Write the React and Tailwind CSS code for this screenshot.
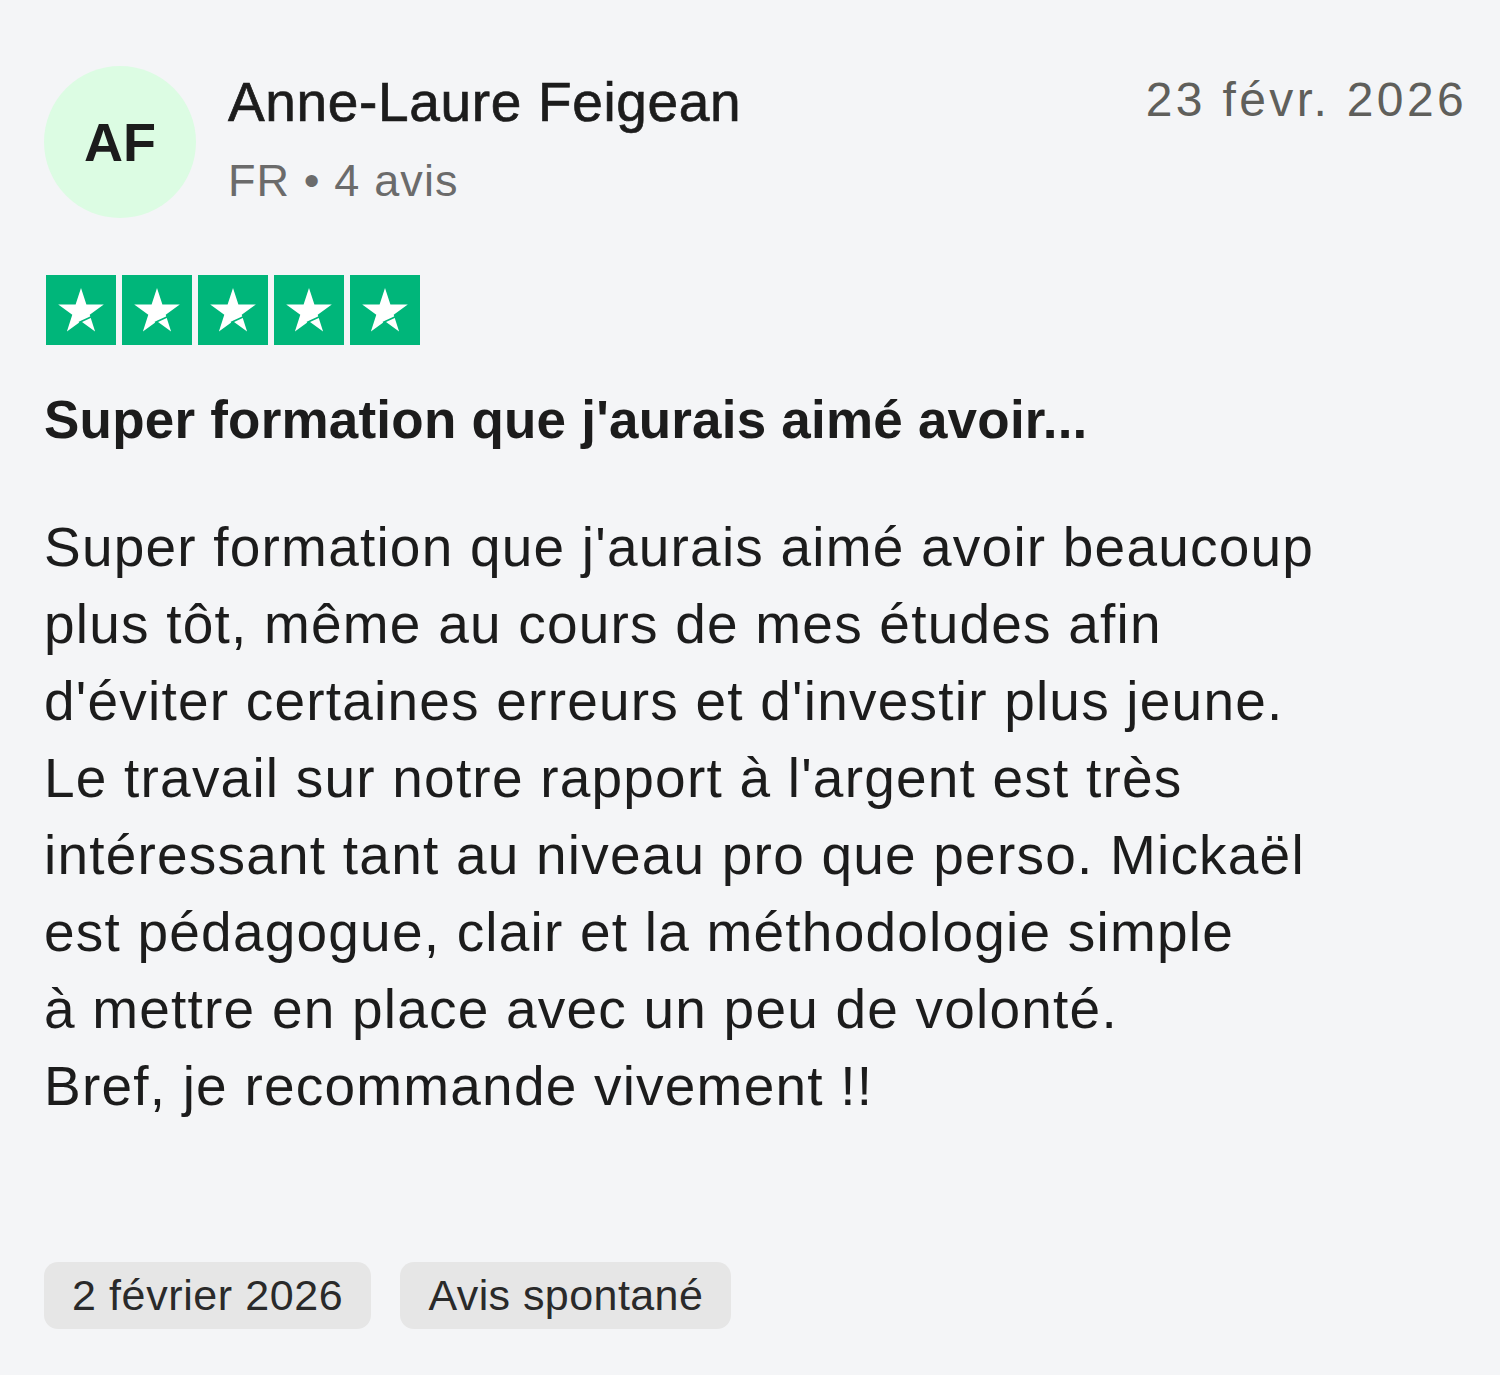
function Star() {
  return (
    <div className="flex h-[70px] w-[70px] items-center justify-center bg-[#00b67a]">
      <svg viewBox="0 0 70 70" className="h-[70px] w-[70px]">
        <path
          d="M35 13 L40.4 29.6 L57.8 29.6 L43.7 39.8 L49.1 56.4 L35 46.2 L20.9 56.4 L26.3 39.8 L12.2 29.6 L29.6 29.6 Z"
          fill="#fff"
        />
        <path d="M33 47.6 L46 41.6" stroke="#00b67a" strokeWidth="1.6" />
      </svg>
    </div>
  );
}

const lines = [
  "Super formation que j'aurais aimé avoir beaucoup",
  'plus tôt, même au cours de mes études afin',
  "d'éviter certaines erreurs et d'investir plus jeune.",
  "Le travail sur notre rapport à l'argent est très",
  'intéressant tant au niveau pro que perso. Mickaël',
  'est pédagogue, clair et la méthodologie simple',
  'à mettre en place avec un peu de volonté.',
  'Bref, je recommande vivement !!',
];

export default function App() {
  return (
    <div className="min-h-[1375px] w-full bg-[#f4f5f7] pl-[44px] pr-[33px] pt-[66px] font-['Liberation_Sans',Arial,sans-serif] text-[#1c1c1c]">
      <div className="flex items-start">
        <div className="flex h-[152px] w-[152px] shrink-0 items-center justify-center rounded-full bg-[#dcfce3] text-[54px] font-bold">
          AF
        </div>
        <div className="ml-[32px] flex-1">
          <div className="text-[55px] leading-[72px] tracking-[0.012em] [-webkit-text-stroke:0.7px_#1c1c1c]">Anne-Laure Feigean</div>
          <div className="mt-[13px] text-[45px] leading-[60px] tracking-[0.025em] text-[#6b6b6b]">FR • 4 avis</div>
        </div>
        <div className="mt-[4px] text-[48px] leading-[60px] tracking-[0.07em] text-[#5f5f5b]">23 févr. 2026</div>
      </div>

      <div className="ml-[2px] mt-[57px] flex gap-[6px]">
        <Star />
        <Star />
        <Star />
        <Star />
        <Star />
      </div>

      <h2 className="mt-[36px] text-[53px] font-bold leading-[78px] tracking-[0.004em]">
        Super formation que j'aurais aimé avoir...
      </h2>

      <p className="mt-[50px] text-[55px] leading-[77px] tracking-[0.022em]">
        {lines.map((l) => (
          <span key={l} className="block">
            {l}
          </span>
        ))}
      </p>

      <div className="mt-[137px] flex gap-[29px] text-[#2a2a2a]">
        <span className="flex h-[67px] items-center rounded-[14px] bg-[#e6e6e6] px-[28px] text-[43px] tracking-[0.014em]">2 février 2026</span>
        <span className="flex h-[67px] items-center rounded-[14px] bg-[#e6e6e6] px-[28px] text-[43px] tracking-[0.01em]">Avis spontané</span>
      </div>
    </div>
  );
}
